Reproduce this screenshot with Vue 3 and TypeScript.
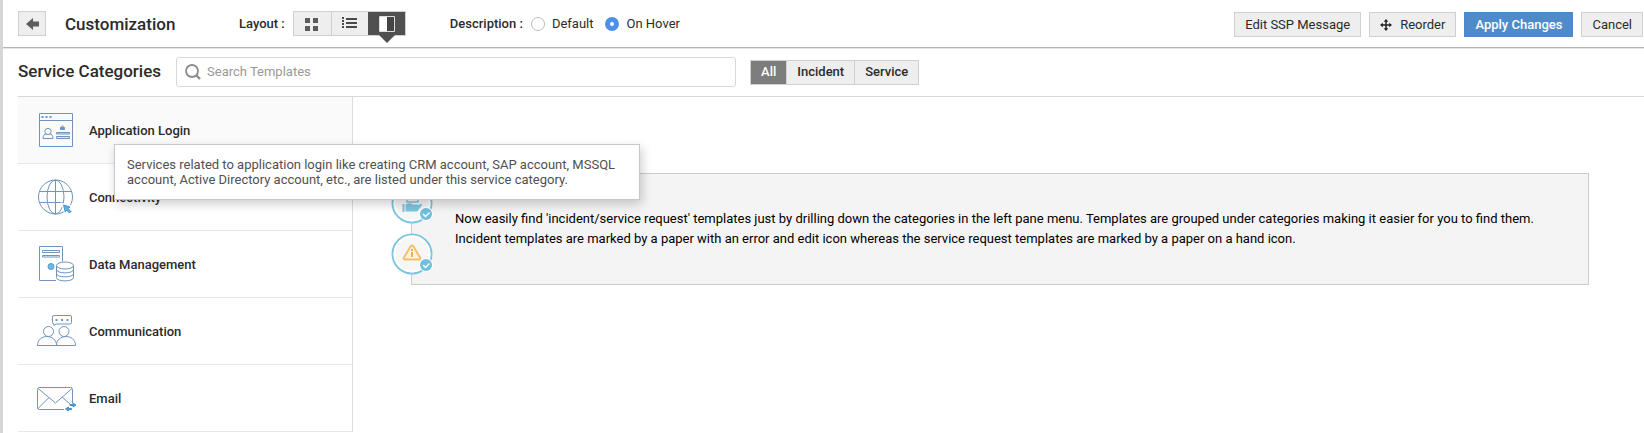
<script setup lang="ts">
import { ref } from 'vue'

type Layout = 'grid' | 'list' | 'split'
type Filter = 'All' | 'Incident' | 'Service'
type IconName = 'login' | 'globe' | 'data' | 'people' | 'mail'

interface Category {
  name: string
  icon: IconName
  description?: string
}

const layouts: { id: Layout; label: string }[] = [
  { id: 'grid', label: 'Grid layout' },
  { id: 'list', label: 'List layout' },
  { id: 'split', label: 'Split layout' },
]
const filters: Filter[] = ['All', 'Incident', 'Service']
const categories: Category[] = [
  {
    name: 'Application Login',
    icon: 'login',
    description:
      'Services related to application login like creating CRM account, SAP account, MSSQL account, Active Directory account, etc., are listed under this service category.',
  },
  { name: 'Connectivity', icon: 'globe' },
  { name: 'Data Management', icon: 'data' },
  { name: 'Communication', icon: 'people' },
  { name: 'Email', icon: 'mail' },
]

const layout = ref<Layout>('split')
const filter = ref<Filter>('All')
const descriptionMode = ref('hover')
const search = ref('')
const active = ref('Application Login')
</script>

<template>
  <div class="page">
    <header class="topbar">
      <button class="btn back" type="button" aria-label="Back">
        <svg width="13" height="12" viewBox="0 0 13 12"><path d="M0 6 7 0v3.500h6v5H7V12z" fill="#5c5c5c" /></svg>
      </button>
      <h1 class="title">Customization</h1>

      <div class="layout-group">
        <span class="label">Layout :</span>
        <div class="segments">
          <button
            v-for="item in layouts"
            :key="item.id"
            type="button"
            class="segment icon-segment"
            :class="{ dark: layout === item.id }"
            :aria-label="item.label"
            @click="layout = item.id"
          >
            <svg v-if="item.id === 'grid'" width="14" height="14" viewBox="0 0 14 14" fill="#5c5c5c">
              <path d="M0 1h5v5H0zM8 1h5v5H8zM0 9h5v5H0zM8 9h5v5H8z" />
            </svg>
            <svg v-else-if="item.id === 'list'" width="15" height="14" viewBox="0 0 15 14" fill="#4a4a4a">
              <path d="M0 0h2v2H0zM0 3h2v2H0zM0 6h2v2H0zM0 9h2v2H0zM4 1h11v2H4zM4 5h11v2H4zM4 9h11v2H4z" />
            </svg>
            <svg v-else width="16" height="16" viewBox="0 0 16 16">
              <path d="M.5.5h15v15H.5z" fill="#444" stroke="#ddd" />
              <path d="M1 1h7v14H1z" fill="#fff" />
            </svg>
          </button>
        </div>
      </div>

      <div class="description-group" role="radiogroup" aria-labelledby="desc-label">
        <span id="desc-label" class="label">Description :</span>
        <label class="radio"><input v-model="descriptionMode" type="radio" name="desc" value="default" />Default</label>
        <label class="radio"><input v-model="descriptionMode" type="radio" name="desc" value="hover" />On Hover</label>
      </div>

      <div class="actions">
        <button class="btn" type="button">Edit SSP Message</button>
        <button class="btn" type="button">
          <svg class="move" width="12" height="12" viewBox="0 0 12 12">
            <path d="M6 1v10M1 6h10" stroke="#222" stroke-width="1.500" />
            <path d="M6 0 8.300 2.800H3.700zM6 12 3.700 9.200h4.600zM0 6l2.800-2.300v4.600zM12 6 9.200 8.300V3.700z" fill="#222" />
          </svg>
          Reorder
        </button>
        <button class="btn primary" type="button">Apply Changes</button>
        <button class="btn" type="button">Cancel</button>
      </div>
    </header>

    <div class="toolbar">
      <h2 class="heading">Service Categories</h2>
      <div class="search">
        <svg width="16" height="16" viewBox="0 0 16 16" fill="none" stroke="#8c8c8c">
          <circle cx="7" cy="7" r="6" stroke-width="1.800" />
          <path d="m11.500 11.500 3.500 3.500" stroke-width="2.400" />
        </svg>
        <input v-model="search" type="text" placeholder="Search Templates" aria-label="Search Templates" />
      </div>
      <div class="segments">
        <button
          v-for="item in filters"
          :key="item"
          type="button"
          class="segment"
          :class="{ selected: filter === item }"
          @click="filter = item"
        >
          {{ item }}
        </button>
      </div>
    </div>

    <div class="body">
      <nav class="sidebar" aria-label="Service categories">
        <div v-for="item in categories" :key="item.name" class="entry">
          <button type="button" class="category" :class="{ hovered: active === item.name }" @click="active = item.name">
            <svg width="40" height="40" viewBox="0 0 40 40" fill="none" stroke="#6f94bd">
              <template v-if="item.icon === 'login'">
                <path d="M2.500 3.500h33v33h-33zM2.500 10.500h33" />
                <path d="M4.500 7h2M8.500 7h2M12.500 7h2" stroke-width="2" />
                <circle cx="11" cy="21.500" r="3.200" />
                <path d="M6 28.500c0-3 1.500-4.500 3.500-4.800M12.500 23.700c2 .3 3.500 1.800 3.500 4.800M6 28.500h10" />
                <path d="M19.500 22.500h13v1.500h-13zM19.500 26.500h13v2h-13z" fill="#d9eafa" />
                <path d="M23.500 17.500h4v2h-4z" fill="#4a9fd8" />
                <path d="M24.500 17.500c0-2.500 2-2.500 2 0" />
              </template>
              <template v-else-if="item.icon === 'globe'">
                <circle cx="18.500" cy="20" r="17" />
                <ellipse cx="18.500" cy="20" rx="8.500" ry="17" />
                <path d="M18.500 3v34M3 14.500h31M3 25.500h23" />
                <path d="m26 27.500 8 2.500-2.500 1.500 3 3-1.500 1.500-3-3-1.500 2.500z" fill="#fff" stroke="#fff" stroke-width="3" />
                <path d="m26.500 28 6.500 2-2 1.500 3 3-1.500 1.500-3-3-1.200 2z" fill="#55b5e8" stroke="#4a8fc4" />
              </template>
              <template v-else-if="item.icon === 'data'">
                <path d="M19 36.500H2.500v-34h23v15" />
                <path d="M5.500 6.500h17v2h-17zM5.500 11.500h17v1.500h-17z" />
                <circle cx="14" cy="22.500" r="3" fill="#5cc0f2" />
                <ellipse cx="28" cy="21.500" rx="8.500" ry="3.500" />
                <path d="M19.500 21.500v12c0 4.500 17 4.500 17 0v-12M19.500 25.500c0 4.500 17 4.500 17 0M19.500 29.500c0 4.500 17 4.500 17 0" />
              </template>
              <template v-else-if="item.icon === 'people'">
                <path d="M17 4.500h16q1.500 0 1.500 1.500v5.500q0 1.500-1.500 1.500H19l-2 1.500v-1.500q-1.500 0-1.500-1.500V6q0-1.500 1.500-1.500z" />
                <path d="M18.500 9h2M24 9h2M29.500 9h2" stroke-width="2" />
                <circle cx="11.500" cy="20.500" r="5" />
                <circle cx="27" cy="20.500" r="5" />
                <path d="M.5 34.500c0-12 19-12 19 0zM19.500 34.500c0-12 19-12 19 0z" />
              </template>
              <template v-else>
                <path d="M27 31.500H2.500q-2 0-2-2v-18q0-2 2-2h31q2 0 2 2V25" />
                <path d="M1 10.500 18.500 25 35 10.500M1 30.500l11-11M33 26l-8-7" />
                <path d="M33 26.500h3V25l3 2-3 2v-1.500h-3zM34.500 30.500h-3V29l-3 2 3 2v-1.500h3z" fill="#4a9fd8" stroke="#4a8fc4" />
              </template>
            </svg>
            <span class="name">{{ item.name }}</span>
          </button>
          <div v-if="descriptionMode === 'hover' && active === item.name && item.description" class="tooltip" role="tooltip">
            {{ item.description }}
          </div>
        </div>
      </nav>

      <main class="content">
        <section class="notice">
          <div class="badges">
            <svg width="42" height="42" viewBox="0 0 42 42">
              <circle cx="21" cy="21" r="19.500" fill="#f6f6f6" stroke="#7cc5de" stroke-width="2" />
              <circle cx="21" cy="21" r="17.500" fill="none" stroke="#fff" stroke-width="2" />
              <path d="M12.500 22v8" stroke="#7cc5de" stroke-width="2" />
              <path d="M15 23c3-2 5-1 7 0h5c0 2-2 2-4 2h2l5-3c1 0 1 1 0 2l-4 5H15z" fill="#7cc5de" stroke="#7cc5de" />
              <path d="M16 10h8l3 3v7H16z" fill="none" stroke="#7cc5de" stroke-width="1.500" />
              <circle cx="35" cy="32" r="7" fill="#fff" />
              <circle cx="35" cy="32" r="6" fill="#71bfdc" />
              <path d="m32 32 2.500 2.500 4-4" fill="none" stroke="#fff" stroke-width="1.500" />
            </svg>
            <svg width="42" height="42" viewBox="0 0 42 42">
              <circle cx="21" cy="21" r="19.500" fill="#f6f6f6" stroke="#7cc5de" stroke-width="2" />
              <circle cx="21" cy="21" r="17.500" fill="none" stroke="#fff" stroke-width="2" />
              <path d="M21 12.500c.8 0 1.200.5 1.500 1l6.500 11c.6 1.200 0 2-1 2H14c-1 0-1.600-.8-1-2l6.500-11c.3-.5.700-1 1.500-1z" fill="#fff4df" stroke="#f5bf6a" stroke-width="2" stroke-linejoin="round" />
              <path d="M21 16v2M21 19v5" stroke="#f0ad4b" stroke-width="2" />
              <circle cx="35" cy="32" r="7" fill="#fff" />
              <circle cx="35" cy="32" r="6" fill="#71bfdc" />
              <path d="m32 32 2.500 2.500 4-4" fill="none" stroke="#fff" stroke-width="1.500" />
            </svg>
          </div>
          <p>
            Now easily find 'incident/service request' templates just by drilling down the categories in the left pane menu. Templates are grouped under categories making it easier for you to find them. Incident templates are marked by a paper with an error and edit icon whereas the service request templates are marked by a paper on a hand icon.
          </p>
        </section>
      </main>
    </div>
  </div>
</template>

<style>
html,
body {
  background: #fff;
  overflow: hidden;
}
</style>

<style scoped>
.page {
  min-height: 100vh;
  box-sizing: border-box;
  border-left: 3px solid #d6d6d6;
  font: 13px/20px Roboto, sans-serif;
  color: #2b2b2b;
}
button,
input {
  font: inherit;
  color: inherit;
  margin: 0;
}
button {
  cursor: pointer;
}
svg {
  display: block;
  flex: none;
}
h1,
h2,
p {
  margin: 0;
}
.topbar {
  display: flex;
  align-items: center;
  height: 47px;
  padding-left: 15px;
  border-bottom: 1px solid #b4b4b4;
  box-shadow: 0 1px 0 #e6e6e6;
}
.btn {
  display: flex;
  align-items: center;
  justify-content: center;
  box-sizing: border-box;
  height: 25px;
  padding: 0 10px;
  border: 1px solid #d0d0d0;
  background: #eee;
  white-space: nowrap;
}
.btn.primary {
  background: #508bc9;
  border-color: #4c88c8;
  color: #fff;
  font-weight: 500;
}
.back {
  width: 28px;
  padding: 0;
}
.title,
.heading {
  font-size: 17px;
  line-height: 24px;
  font-weight: 500;
  white-space: nowrap;
}
.title {
  margin-left: 19px;
  width: 174px;
}
.heading {
  padding-bottom: 2px;
}
.label {
  font-weight: 500;
  white-space: nowrap;
}
.layout-group,
.description-group,
.actions {
  display: flex;
  align-items: center;
  gap: 8px;
}
.description-group {
  margin-left: 44px;
}
.actions {
  margin-left: auto;
  padding: 2px 1px 0 0;
}
.move {
  margin-right: 8px;
}
.segments {
  display: flex;
  border: 1px solid #d0d0d0;
  background: #eee;
}
.segment {
  display: flex;
  align-items: center;
  justify-content: center;
  height: 23px;
  padding: 0 10px;
  border: 0;
  background: none;
  font-weight: 500;
}
.segment + .segment {
  border-left: 1px solid #d0d0d0;
}
.icon-segment {
  position: relative;
  width: 37px;
  padding: 0;
}
.segment.selected {
  background: #7d7d7d;
  color: #fff;
}
.segment.dark {
  background: #505050;
  border-color: #505050;
}
.segment.dark::after {
  content: '';
  position: absolute;
  top: 100%;
  left: 50%;
  margin-left: -8px;
  border: 8px solid transparent;
  border-top-color: #505050;
  border-bottom: 0;
}
.radio {
  display: flex;
  align-items: center;
  gap: 7px;
  white-space: nowrap;
}
.radio + .radio {
  margin-left: 4px;
}
.radio input {
  appearance: none;
  box-sizing: border-box;
  width: 14px;
  height: 14px;
  border: 1px solid #bbb;
  border-radius: 50%;
  background: #fff;
}
.radio input:checked {
  border: 5px solid #4e90ee;
}
.toolbar {
  display: flex;
  align-items: center;
  height: 48px;
  margin-left: 15px;
  border-bottom: 1px solid #d8d8d8;
}
.search {
  display: flex;
  align-items: center;
  box-sizing: border-box;
  flex: 0 1 560px;
  height: 30px;
  margin: 0 14px 0 15px;
  padding: 0 8px;
  gap: 6px;
  border: 1px solid #d6dada;
  border-radius: 3px;
}
.search input {
  flex: 1;
  min-width: 0;
  padding: 0;
  border: 0;
  outline: 0;
  background: none;
}
.search input::placeholder {
  color: #999;
  opacity: 1;
}
.body {
  display: flex;
  margin-left: 15px;
}
.sidebar {
  flex: 0 0 334px;
  border-right: 1px solid #ddd;
}
.entry {
  position: relative;
}
.category {
  display: flex;
  align-items: center;
  gap: 12px;
  width: 100%;
  height: 67px;
  padding: 0 19px;
  border: 0;
  border-bottom: 1px solid #e8e8e8;
  background: #fff;
  font-weight: 500;
  text-align: left;
}
.category.hovered {
  background: #fafafa;
}
.name {
  padding-top: 2px;
}
.tooltip {
  position: absolute;
  z-index: 2;
  top: 47px;
  left: 96px;
  box-sizing: border-box;
  width: 526px;
  padding: 12px;
  border: 1px solid #c8c8c8;
  background: #fff;
  box-shadow: 2px 4px 10px rgba(0, 0, 0, 0.2);
  color: #505050;
  line-height: 15px;
}
.content {
  flex: 1;
  min-width: 0;
  padding: 76px 55px 0 58px;
}
.notice {
  position: relative;
  padding: 35px 24px 35px 43px;
  border: 1px solid #ccc;
  background: #f4f4f4;
  color: #000;
}
.badges {
  position: absolute;
  top: 8px;
  left: -21px;
  display: grid;
  gap: 9px;
}
</style>
